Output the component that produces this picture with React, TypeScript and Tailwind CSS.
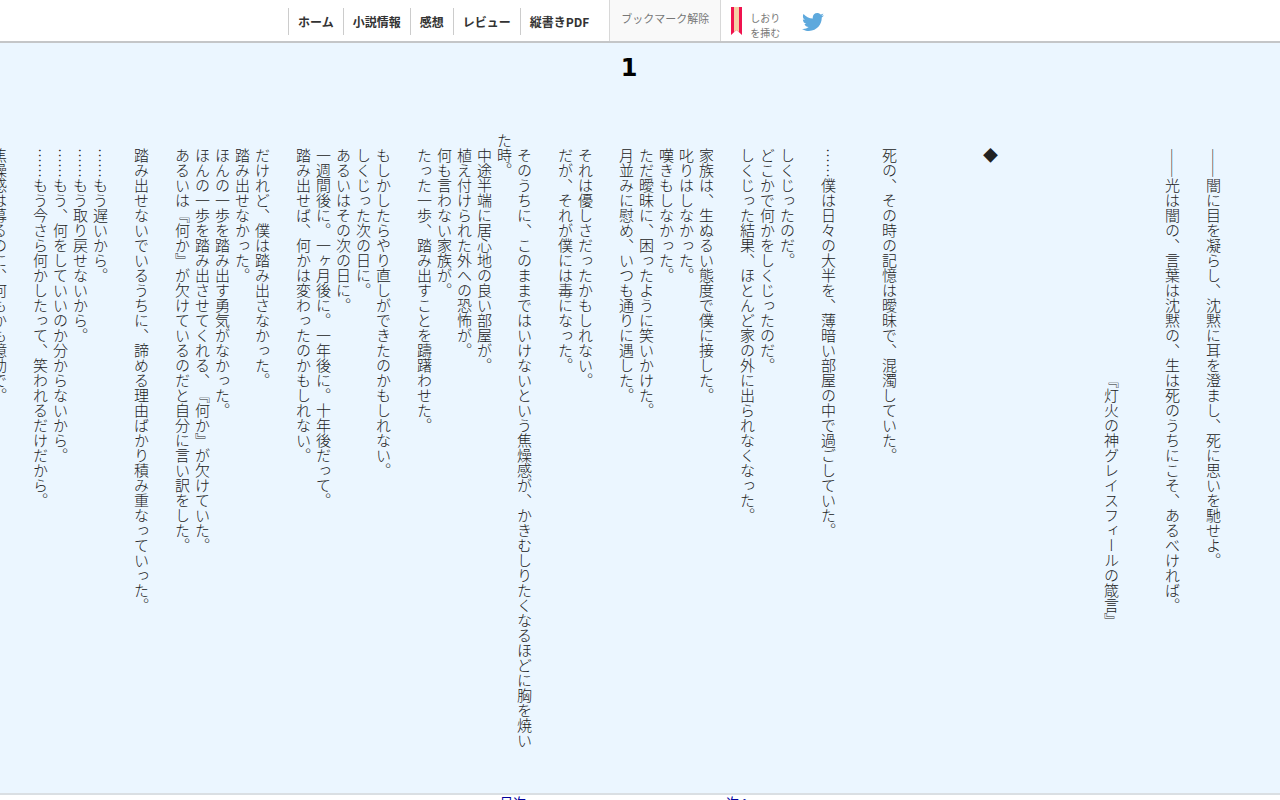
import { FaTwitter } from 'react-icons/fa';

const navItems = ['ホーム', '小説情報', '感想', 'レビュー', '縦書きPDF'];

// margin to the left of a stanza, by the number of blank lines after it
const gaps = {
  1: 'ml-[21px]',
  2: 'ml-[41px]',
  4: 'ml-[81px]',
  5: 'ml-[101px]'
};

const stanzas: { gap: keyof typeof gaps; lines: string[] }[] = [
  { gap: 1, lines: ['　――闇に目を凝らし、沈黙に耳を澄まし、死に思いを馳せよ。'] },
  { gap: 2, lines: ['　――光は闇の、言葉は沈黙の、生は死のうちにこそ、あるべければ。'] },
  { gap: 5, lines: ['　　　　　　　　　　　　　　　　『灯火の神グレイスフィールの箴言』'] },
  { gap: 4, lines: ['　◆'] },
  { gap: 2, lines: ['　死の、その時の記憶は曖昧で、混濁していた。'] },
  { gap: 1, lines: ['　……僕は日々の大半を、薄暗い部屋の中で過ごしていた。'] },
  {
    gap: 1,
    lines: [
      '　しくじったのだ。',
      '　どこかで何かをしくじったのだ。',
      '　しくじった結果、ほとんど家の外に出られなくなった。'
    ]
  },
  {
    gap: 1,
    lines: [
      '　家族は、生ぬるい態度で僕に接した。',
      '　叱りはしなかった。',
      '　嘆きもしなかった。',
      '　ただ曖昧に、困ったように笑いかけた。',
      '　月並みに慰め、いつも通りに遇した。'
    ]
  },
  { gap: 1, lines: ['　それは優しさだったかもしれない。', '　だが、それが僕には毒になった。'] },
  {
    gap: 1,
    lines: [
      '　そのうちに、このままではいけないという焦燥感が、かきむしりたくなるほどに胸を焼いた時。',
      '　中途半端に居心地の良い部屋が。',
      '　植え付けられた外への恐怖が。',
      '　何も言わない家族が。',
      '　たった一歩、踏み出すことを躊躇わせた。'
    ]
  },
  {
    gap: 1,
    lines: [
      '　もしかしたらやり直しができたのかもしれない。',
      '　しくじった次の日に。',
      '　あるいはその次の日に。',
      '　一週間後に。一ヶ月後に。一年後に。十年後だって。',
      '　踏み出せば、何かは変わったのかもしれない。'
    ]
  },
  {
    gap: 1,
    lines: [
      '　だけれど、僕は踏み出さなかった。',
      '　踏み出せなかった。',
      '　ほんの一歩を踏み出す勇気がなかった。',
      '　ほんの一歩を踏み出させてくれる、『何か』が欠けていた。',
      '　あるいは『何か』が欠けているのだと自分に言い訳をした。'
    ]
  },
  { gap: 1, lines: ['　踏み出せないでいるうちに、諦める理由ばかり積み重なっていった。'] },
  {
    gap: 1,
    lines: [
      '　……もう遅いから。',
      '　……もう取り戻せないから。',
      '　……もう、何をしていいのか分からないから。',
      '　……もう今さら何かしたって、笑われるだけだから。'
    ]
  },
  { gap: 1, lines: ['　焦燥感は募るのに、何もかも億劫で。'] }
];

function Header() {
  return (
    <header className="flex h-[43px] border-b-2 border-[#c4c6c8] bg-white pl-72">
      <nav className="flex items-start pt-2 pr-[11px]">
        {navItems.map((item) => (
          <a
            key={item}
            href="#"
            className="border-l border-[#ccc] px-[9px] text-xs leading-[27px] font-bold text-[#333]"
          >
            {item}
          </a>
        ))}
      </nav>
      <button
        type="button"
        className="border-x border-[#d8d8d8] bg-[#f9f9f9] px-[11px] pb-1 text-[11px] text-[#777]"
      >
        ブックマーク解除
      </button>
      <button type="button" className="flex items-start gap-2 pt-[7px] pl-[10px] text-left">
        <svg width="11" height="28" viewBox="0 0 11 28" aria-hidden="true">
          <path d="M0 0h11v28L5.500 23 0 28z" fill="#f0134f" />
          <path d="M3 0h5v25.300L5.500 23 3 25.300z" fill="#f5cfa5" />
        </svg>
        <span className="pt-[3px] text-[10px] leading-[15px] text-[#777]">
          しおり
          <br />
          を挿む
        </span>
      </button>
      <a href="#" aria-label="Twitter" className="pt-[11px] pl-[22px] text-[#5ea9dd]">
        <FaTwitter size={22} />
      </a>
    </header>
  );
}

export default function App() {
  return (
    <div className="bg-white font-['Noto_Sans_CJK_JP',sans-serif]">
      <Header />
      <main className="overflow-hidden border-b-2 border-[#dadfe3] bg-[#ebf6ff] pt-[9px] pb-10">
        <h1 className="pr-[22px] text-center font-['DejaVu_Sans',sans-serif] text-2xl leading-8 font-bold text-black">
          1
        </h1>
        <div className="mt-[49px] h-[620px] w-full overflow-hidden pr-[57px] text-[15px] leading-5 font-light text-[#222] [text-spacing-trim:space-all] [writing-mode:vertical-rl]">
          {stanzas.map((stanza) => (
            <section key={stanza.lines[0]} className={gaps[stanza.gap]}>
              {stanza.lines.map((line) => (
                <p key={line}>{line}</p>
              ))}
            </section>
          ))}
        </div>
      </main>
      <footer className="flex justify-center gap-[200px] pr-7 text-[13px] leading-[14px] text-[#00009c]">
        <a href="#">目次</a>
        <a href="#">次へ</a>
      </footer>
    </div>
  );
}
